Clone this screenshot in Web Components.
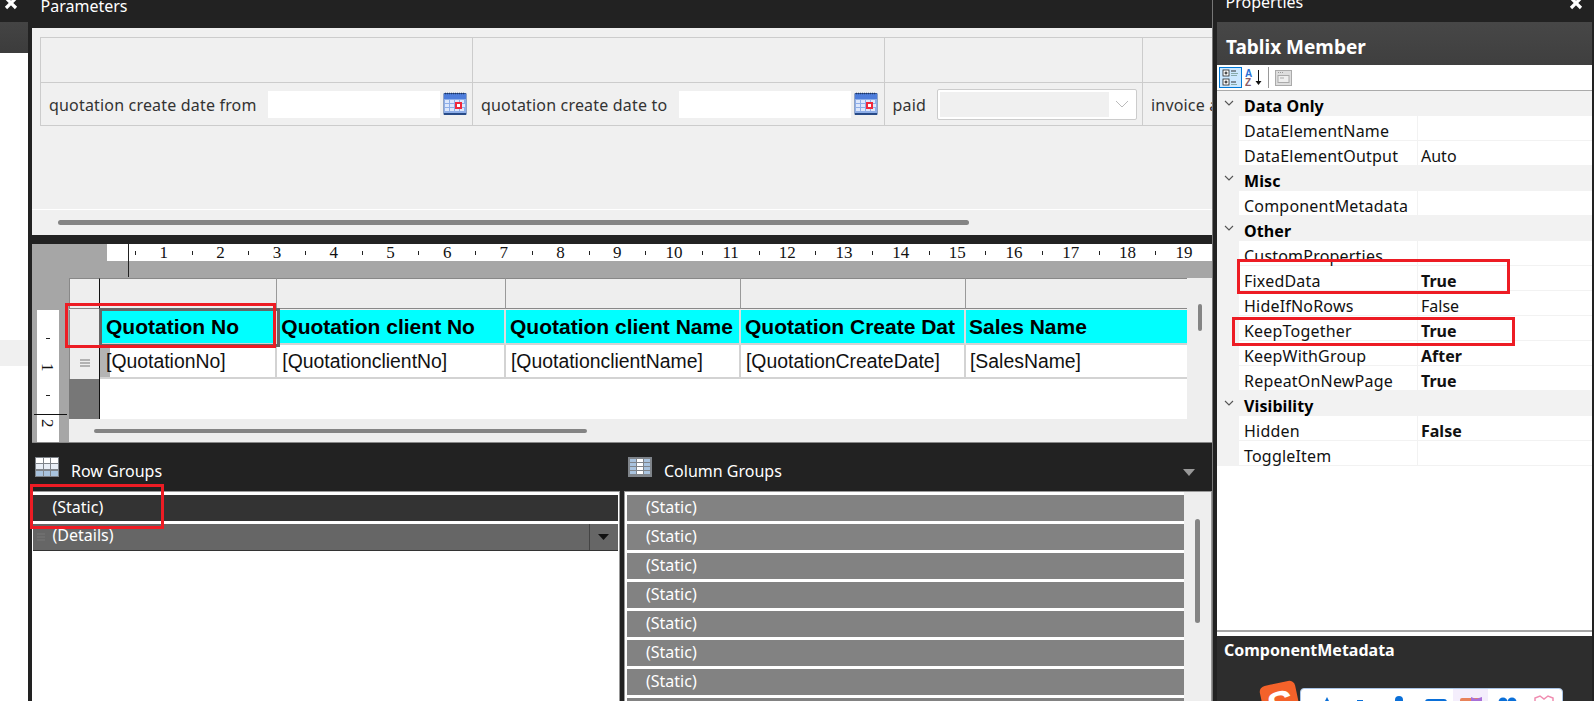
<!DOCTYPE html>
<html><head><meta charset="utf-8"><title>Report designer</title>
<style>html,body{margin:0;height:701px;overflow:hidden;background:#222;font-family:"Noto Sans","Open Sans",sans-serif}</style>
</head><body>
<app-shell>
  <left-rail></left-rail>
  <main-col>
    <param-panel></param-panel>
    <design-surface></design-surface>
    <group-pane></group-pane>
  </main-col>
  <prop-panel>
    <prop-cat>Data Only</prop-cat>
    <prop-row name="DataElementName"></prop-row>
    <prop-row name="DataElementOutput" value="Auto"></prop-row>
    <prop-cat>Misc</prop-cat>
    <prop-row name="ComponentMetadata"></prop-row>
    <prop-cat>Other</prop-cat>
    <prop-row name="CustomProperties"></prop-row>
    <prop-row name="FixedData" value="True" bold></prop-row>
    <prop-row name="HideIfNoRows" value="False"></prop-row>
    <prop-row name="KeepTogether" value="True" bold></prop-row>
    <prop-row name="KeepWithGroup" value="After" bold></prop-row>
    <prop-row name="RepeatOnNewPage" value="True" bold></prop-row>
    <prop-cat>Visibility</prop-cat>
    <prop-row name="Hidden" value="False" bold></prop-row>
    <prop-row name="ToggleItem"></prop-row>
  </prop-panel>
  <red-mark style="left:65px;top:303px;width:205px;height:39px"></red-mark>
  <red-mark style="left:30px;top:484px;width:128px;height:39px"></red-mark>
  <red-mark style="left:1237px;top:259px;width:267px;height:29px"></red-mark>
  <red-mark style="left:1232px;top:317px;width:277px;height:23px"></red-mark>
</app-shell>
<script>
const def=(name,html,ready)=>customElements.define(name,class extends HTMLElement{
  constructor(){super();this.attachShadow({mode:'open'}).innerHTML=typeof html==='function'?html(this):html;}
  connectedCallback(){if(ready)ready(this,this.shadowRoot);}
});
const closeX=`<svg width="14" height="14" viewBox="0 0 14 14"><path d="M2 2l10 10M12 2L2 12" stroke="#fff" stroke-width="3.2"/></svg>`;

def('app-shell',`<style>:host{display:flex;position:relative;width:1594px;height:701px;overflow:hidden;background:#222}</style><slot></slot>`);

def('red-mark',`<style>:host{display:block;position:absolute;border:3px solid #ed1c24;pointer-events:none}</style>`);

def('left-rail',`<style>
:host{display:flex;flex-direction:column;flex:none;width:28px;margin-right:4px;background:#fff;overflow:hidden}
.top{height:22px;background:#222;position:relative;padding-left:4px;box-sizing:border-box}
.top svg{display:block;margin-top:-4px}
.tab{height:31px;background:linear-gradient(#444,#3c3c3c)}
.gap{height:287px}
.sel{height:26px;background:#f0f0f0}
</style><div class="top">${closeX}</div><div class="tab"></div><div class="gap"></div><div class="sel"></div>`);

def('main-col',`<style>:host{display:flex;flex-direction:column;flex:none;width:1180px;height:701px;box-shadow:1px 0 0 #777}</style><slot></slot>`);

def('cal-icon',`<style>:host{display:block;width:24px;height:24px;flex:none}svg{display:block}</style>
<svg width="24" height="24" viewBox="0 0 24 24">
<rect x=".5" y="1" width="23" height="22" rx="1" fill="#2f5597"/>
<rect x="1" y="2" width="22" height="5" fill="#4e7ddb"/>
<path d="M2 1.500h20" stroke="#1d3565" stroke-width="1.600" stroke-dasharray="1 1"/>
<rect x="1" y="7" width="22" height="14" fill="#8eaee8"/>
<g fill="#dde7fb"><rect x="2" y="8" width="4" height="3"/><rect x="7" y="8" width="4" height="3"/><rect x="12" y="8" width="4" height="3"/><rect x="17" y="8" width="4" height="3"/><rect x="2" y="12" width="4" height="3"/><rect x="7" y="12" width="4" height="3"/><rect x="2" y="16" width="4" height="3"/><rect x="7" y="16" width="4" height="3"/><rect x="12" y="16" width="4" height="3"/><rect x="17" y="16" width="4" height="3"/><rect x="19" y="12" width="3" height="3"/></g>
<rect x="13" y="11" width="5" height="5" fill="#fff" stroke="#f0283c" stroke-width="2"/>
<rect x="1" y="21" width="22" height="2" fill="#274a87"/>
</svg>`);

def('date-box',`<style>
:host{display:flex;align-items:center;flex:none}
.i{width:var(--w,172px);height:27px;background:#fff}
cal-icon{margin-left:3px}
</style><div class="i"></div><cal-icon></cal-icon>`);

def('param-cell',`<style>
:host{display:flex;flex:none;flex-direction:column;box-sizing:border-box;border-right:1px solid #ccc;overflow:hidden}
.h{height:44px;border-bottom:1px solid #ccc;flex:none}
.b{height:43px;display:flex;align-items:center;padding-left:8px;color:#333;font-size:16px;white-space:nowrap;letter-spacing:.18px}
::slotted(span){padding-top:2px}
</style><div class="h"></div><div class="b"><slot></slot></div>`);

def('param-panel',`<style>
:host{display:block;height:235px;flex:none;overflow:hidden}
.t{height:28px;background:#222;color:#fff;font-size:16px;line-height:12px;padding-left:8.500px;box-sizing:border-box}
.b{height:207px;background:#f0f0f0;padding:9px 0 0 8px;box-sizing:border-box;display:flex;flex-direction:column}
.g{display:flex;height:89px;box-sizing:border-box;border:1px solid #ccc;border-right:0;width:1172px;overflow:hidden;flex:none}
.l{height:1px;background:#fff;margin:83px 0 0 -8px;flex:none}
.s{height:5px;border-radius:3px;background:#848484;width:911px;margin:10px 0 0 18px;flex:none}
.lb{margin-right:12px}
.lb.p{margin-right:11px}
.sel{flex:none;box-sizing:border-box;width:200px;height:31px;background:#fff;border:1px solid #ccc;border-radius:2px;padding:2px;display:flex;align-items:stretch}
.sel i{display:block;width:169px;background:#f0f0f0}
.sel svg{margin:auto}
</style>
<div class="t">Parameters</div>
<div class="b">
 <div class="g">
  <param-cell style="width:432px"><span class="lb p">quotation create date from</span><date-box></date-box></param-cell>
  <param-cell style="width:411.500px"><span class="lb">quotation create date to</span><date-box></date-box></param-cell>
  <param-cell style="width:258.500px"><span class="lb p">paid</span><div class="sel"><i></i><svg width="14" height="8" viewBox="0 0 14 8"><path d="M1 1l6 6 6-6" fill="none" stroke="#bbb"/></svg></div></param-cell>
  <param-cell style="width:100px;border:0"><span>invoice amount</span></param-cell>
 </div>
 <div class="l"></div><div class="s"></div>
</div>`);

def('h-ruler',()=>{let u='';for(let i=1;i<=20;i++)u+=`<div class="u"><i></i><b>${i}</b></div>`;
return `<style>
:host{display:flex;height:17px;background:#fff;overflow:hidden;font:17px/17px "Liberation Serif",serif;color:#111}
.u{flex:none;width:56.700px;height:17px;position:relative;display:flex;align-items:center;justify-content:flex-end}
i{display:block;width:1px;height:4px;background:#222;margin-right:auto;margin-left:28px}
b{font-weight:400;width:24px;text-align:center;margin-right:-12px;flex:none}
</style>${u}`});

def('v-ruler',`<style>
:host{display:flex;flex-direction:column;align-items:center;flex:none;width:21.500px;height:133px;background:#fff;font:17px/17px "Liberation Serif",serif;color:#111}
.u{flex:none;height:28.600px;display:flex;align-items:center;justify-content:center}
.u i{display:block;width:4.500px;height:1px;background:#222}
.n{writing-mode:vertical-rl}
.ln{flex:none;width:33px;height:1px;background:#111;margin:4px 0 0 -3px;align-self:flex-start}
.n2{writing-mode:vertical-rl;margin-top:4px;height:18px;overflow:hidden;line-height:17px}
.sp{height:14px;flex:none}
</style>
<div class="sp"></div><div class="u"><i></i></div><div class="u n">1</div><div class="u"><i></i></div><div class="ln"></div><div class="n2">2</div>`);

def('tablix-view',`<style>
:host{display:grid;grid-template-columns:31px 177.300px 228.700px 235px 225px 221px 25px;grid-template-rows:32px 35px 34px 40px 24px;flex:none;width:1143px;height:165px;position:relative;font-family:"Liberation Sans",sans-serif;background:#eee;overflow:hidden}
.hh{background:#eee;border-top:1px solid #888;border-bottom:1px solid #888;border-right:1px solid #111;border-left:1px solid #888;box-sizing:border-box;margin-bottom:1px}
.ch{background:#eee;border-top:1px solid #888;border-bottom:1px solid #888;border-right:1px solid #999;box-sizing:border-box;margin-bottom:1px}
.rail{grid-row:1/5;grid-column:7;background:#eee;padding:26px 0 0 11px}
.rail i{display:block;width:4px;height:27px;border-radius:2px;background:#848484}
.rh{background:#eee;border-left:1px solid #888;border-right:1px solid #111;box-sizing:border-box}
.rh.m{border-top:1px solid #ccc;display:flex;align-items:center;justify-content:center}
.rh.d{background:#777;border:0;border-right:1px solid #111}
.c{background:#0ff;font-weight:700;font-size:21px;line-height:33px;padding:0 0 0 4px;border-right:2px solid #ddd;border-bottom:2px solid #d3d3d3;box-sizing:border-box;white-space:nowrap;overflow:hidden;color:#000}
.c.a{padding-left:6px}
.c.z{padding-left:3px;border-right:0}
.v{background:#fff;font-size:19.400px;line-height:32px;padding:0 0 0 5px;border-right:2px solid #d3d3d3;border-bottom:2px solid #d3d3d3;box-sizing:border-box;white-space:nowrap;overflow:hidden;color:#111}
.v.f{background:linear-gradient(90deg,#b4b4b4 10px,#fff 10px);padding-left:6px}
.v.z{padding-left:4px;border-right:0}
.e{grid-column:2/7;background:#fff}
.foot{grid-column:1/8;background:#eee;padding:10px 0 0 25px}
.foot i{display:block;height:4px;width:493px;border-radius:2px;background:#848484}
.selc{position:absolute;left:30px;top:30px;width:175px;height:33px;border:3px solid #666}
</style>
<div class="hh"></div><div class="ch"></div><div class="ch"></div><div class="ch"></div><div class="ch"></div><div class="ch" style="border-right:0"></div><div class="rail"><i></i></div>
<div class="rh"></div><div class="c a">Quotation No</div><div class="c">Quotation client No</div><div class="c">Quotation client Name</div><div class="c">Quotation Create Dat</div><div class="c z">Sales Name</div>
<div class="rh m"><svg width="12" height="8" viewBox="0 0 12 8"><path d="M1 1h10M1 4h10M1 7h10" stroke="#777"/></svg></div><div class="v f">[QuotationNo]</div><div class="v">[QuotationclientNo]</div><div class="v">[QuotationclientName]</div><div class="v">[QuotationCreateDate]</div><div class="v z">[SalesName]</div>
<div class="rh d"></div><div class="e"></div>
<div class="foot"><i></i></div>
<div class="selc"></div>`);

def('design-surface',`<style>
:host{display:block;height:208px;flex:none;background:#222;padding-top:9px;box-sizing:border-box}
.a{height:199px;background:#a6a6a6;display:flex;flex-direction:column;border-bottom:1px solid #888;box-sizing:border-box;position:relative;overflow:hidden}
.top{display:flex;height:34px;flex:none}
h-ruler{flex:none;width:1105px;margin-left:75px}
.vl{position:absolute;left:96px;top:0;width:1px;height:33px;background:#222}
.m{display:flex;flex:1;min-height:0}
.gut{width:37px;flex:none;padding:32px 0 0 5px;box-sizing:border-box}
</style>
<div class="a"><div class="top"><h-ruler></h-ruler></div><div class="vl"></div>
<div class="m"><div class="gut"><v-ruler></v-ruler></div><tablix-view></tablix-view></div>
</div>`);

def('table-icon',h=>{
const cell=(x,y,w,hh,f)=>`<rect x="${x}" y="${y}" width="${w}" height="${hh}" fill="${f}"/>`;
let c='';
if(h.getAttribute('dir')==='col'){
  const cols=[[2,6,'#a9c3de'],[9,6,'#fff'],[16,6,'#a9c3de']];
  for(const [x,w,f] of cols)for(const y of [2,6,10,14])c+=cell(x,y,w,3,f);
}else{
  const rows=[[1,'#fff'],[7,'#e8eef6'],[14,'#a9c3de']];
  for(const [y,f] of rows)for(const [x,w] of [[1,7],[9,6],[16,7]])c+=cell(x,y,w,5,f);
}
return `<style>:host{display:block;width:24px;height:20px;flex:none}svg{display:block}</style>
<svg width="24" height="20" viewBox="0 0 24 20"><rect width="24" height="20" fill="#7f848a"/>${c}</svg>`});

def('group-row',`<style>
:host{display:flex;align-items:center;height:26px;flex:none;background:#828282;color:#fff;font-size:16px;padding-left:19.500px;box-sizing:border-box;margin-bottom:3px;position:relative;white-space:nowrap}
span{margin-top:-2px}
:host([kind=sel]){background:#333}
:host([kind=det]){background:#666;border-bottom:1px solid #333;height:27px;margin-bottom:0}
:host([kind=det]) span{margin-top:-4px}
.g{display:none}
:host([kind=det]) .g{display:block;width:8px;margin-left:-15.500px;margin-right:7.500px;flex:none}
.a{display:none;margin-left:auto;width:29px;height:100%;border-left:1px solid #444;align-items:center;justify-content:center;box-sizing:border-box}
:host([kind=det]) .a{display:flex}
</style><svg class="g" width="8" height="8" viewBox="0 0 8 8"><path d="M0 1h8M0 4h8M0 7h8" stroke="#777"/></svg><span><slot></slot></span><div class="a"><svg width="11" height="6" viewBox="0 0 11 6"><path d="M0 0h11L5.500 6z" fill="#111"/></svg></div>`);

def('group-pane',`<style>
:host{display:block;flex:1;min-height:0;background:#222;overflow:hidden}
.hd{display:flex;height:48px;box-sizing:border-box}
.h{display:flex;align-items:flex-start;color:#fff;font-size:16px;padding-top:14px;box-sizing:border-box;position:relative}
.h span{margin-left:12px;line-height:28px;margin-top:0}
.h1{width:592px;padding-left:3px}
.h2{flex:1;padding-left:4px}
.tri{position:absolute;left:559px;top:26px}
.bd{display:flex;height:220px}
.p{box-sizing:border-box;background:#fff;border:1px solid #999;border-bottom:0;padding-top:3px;overflow:hidden}
.p1{width:589px;margin-left:-1px;padding:3px 1px 0 1px;margin-right:4px}
.p2{width:589px;display:flex;padding-left:2px}
.list{width:557px;flex:none}
.sb{flex:1;background:#eee;margin-top:-3px;padding:27px 0 0 11px}
.sb i{display:block;width:5px;height:104px;border-radius:3px;background:#848484}
</style>
<div class="hd">
 <div class="h h1"><table-icon></table-icon><span>Row Groups</span></div>
 <div class="h h2"><table-icon dir="col"></table-icon><span>Column Groups</span><svg class="tri" width="12" height="7" viewBox="0 0 12 7"><path d="M0 0h12L6 7z" fill="#999"/></svg></div>
</div>
<div class="bd">
 <div class="p p1"><group-row kind="sel">(Static)</group-row><group-row kind="det">(Details)</group-row></div>
 <div class="p p2"><div class="list"><group-row>(Static)</group-row><group-row>(Static)</group-row><group-row>(Static)</group-row><group-row>(Static)</group-row><group-row>(Static)</group-row><group-row>(Static)</group-row><group-row>(Static)</group-row><group-row>(Static)</group-row></div><div class="sb"><i></i></div></div>
</div>`);

def('prop-cat',`<style>
:host{display:flex;align-items:center;height:25px;flex:none;background:#f2f2f2;font-weight:700;font-size:16px;color:#000;box-sizing:border-box;letter-spacing:.1px}
span{padding-top:4px;line-height:20px}
svg{margin:0 9px 0 6px;flex:none}
</style><svg width="12" height="7" viewBox="0 0 12 7"><path d="M2 1l4 4 4-4" fill="none" stroke="#555" stroke-width="1.100"/></svg><span><slot></slot></span>`);

def('prop-row',h=>{const v=h.getAttribute('value')||'',b=h.hasAttribute('bold');return `<style>
:host{display:flex;height:25px;flex:none;background:#fff;border-bottom:1px solid #f2f2f2;box-sizing:border-box;font-size:16px;color:#111;white-space:nowrap;line-height:18px}
.m{width:22px;background:#f2f2f2;flex:none}
.n{width:179px;padding:6px 0 0 5px;box-sizing:border-box;border-right:1px solid #f2f2f2;flex:none;letter-spacing:.2px}
.v{padding:6px 0 0 3px;box-sizing:border-box;font-weight:${b?700:400}}
</style><div class="m"></div><div class="n">${h.getAttribute('name')}</div><div class="v">${v}</div>`});

def('prop-tools',`<style>
:host{display:flex;align-items:center;height:26px;flex:none;background:#fff;border-bottom:1px solid #aaa;box-sizing:border-box;padding-left:2px}
.b{width:23px;height:21px;box-sizing:border-box;background:#cce8ff;border:1px solid #0078d7;display:flex;align-items:center;justify-content:center}
.az{margin-left:3px}
.sep{width:1px;height:21px;background:#999;margin:0 6px 0 5px}
svg{display:block}
text{font:700 10px "Liberation Sans",sans-serif}
</style>
<div class="b"><svg width="17" height="17" viewBox="0 0 17 17"><g fill="#fff" stroke="#222" stroke-width=".8"><rect x="1" y="1" width="6" height="6"/><rect x="1" y="10" width="6" height="6"/></g><path d="M2.500 4h3M4 2.500v3M2.500 13h3M4 11.500v3" stroke="#111"/><path d="M9 2h5M9 13h5" stroke="#333"/><path d="M9 4.500h7M9 6.500h6M9 15.500h6" stroke="#8aa"/></svg></div>
<svg class="az" width="18" height="18" viewBox="0 0 18 18"><text x="0" y="8" fill="#2a6fd6">A</text><text x="0" y="17" fill="#8a5a66">Z</text><path d="M13.500 1v14" stroke="#111"/><path d="M10.500 12h6l-3 4z" fill="#111"/></svg>
<div class="sep"></div>
<svg width="17" height="16" viewBox="0 0 17 16"><rect x=".5" y=".5" width="16" height="15" fill="#ddd" stroke="#aaa"/><path d="M3 2.500h6" stroke="#999" stroke-dasharray="1 1"/><rect x="3" y="5.500" width="11" height="7" fill="#eee" stroke="#aaa"/><path d="M5 8h4" stroke="#aaa"/></svg>`);

def('ime-bar',`<style>
:host{display:block;position:relative;height:65px;flex:none;background:#2d2d2d;color:#fff;overflow:hidden}
.t{font-weight:700;font-size:16px;line-height:20px;padding:4px 0 0 7px}
.bar{position:absolute;left:83px;top:52px;width:263px;height:30px;background:#fff;border:1px solid #a9c4e6;border-radius:4px;box-sizing:border-box}
.logo{position:absolute;left:45px;top:47px;width:36px;height:36px;border-radius:6px;background:#f4622a;transform:rotate(-12deg);color:#fff;font:700 40px/44px "Liberation Sans",sans-serif;text-align:center;overflow:hidden}
.glow{position:absolute;left:236px;top:53px;width:35px;height:14px;background:#f4eefc}
svg{position:absolute}
</style>
<div class="t">ComponentMetadata</div>
<div class="bar"></div><div class="glow"></div><div class="logo">S</div>
<svg style="left:102px;top:59px" width="16" height="14"><path d="M8 2l2 4h5l-4 3 1 5-4-3-4 3 1-5-4-3h5z" fill="#0a6fd8"/></svg>
<svg style="left:137px;top:58px" width="12" height="14"><rect x="3" y="6" width="6" height="8" fill="#0a6fd8"/></svg>
<svg style="left:176px;top:59px" width="12" height="14"><circle cx="6" cy="5" r="4" fill="#0a6fd8"/></svg>
<svg style="left:208px;top:59px" width="24" height="14"><rect x="0" y="4" width="22" height="10" rx="3" fill="#0a6fd8"/></svg>
<svg style="left:243px;top:59px" width="24" height="14"><rect x="0" y="3" width="22" height="11" rx="2" fill="#e8825a"/><path d="M11 14V2l5 2 6-2v12z" fill="#a86fd8"/></svg>
<svg style="left:281px;top:59px" width="20" height="14"><circle cx="5" cy="7" r="4.500" fill="#0a6fd8"/><circle cx="14" cy="7" r="4.500" fill="#0a6fd8"/></svg>
<svg style="left:316px;top:58px" width="22" height="14"><path d="M2 13V4l5-2 4 3 4-3 5 2v9" fill="none" stroke="#f08cb0" stroke-width="1.500"/></svg>`);

def('prop-panel',`<style>
:host{display:flex;flex-direction:column;flex:none;width:375px;height:701px;margin-left:5px;background:#fff;overflow:hidden}
.top{height:22px;background:#222;color:#fff;font-size:16px;line-height:4px;padding-left:8.500px;position:relative;flex:none;box-sizing:border-box}
.top svg{position:absolute;left:352px;top:-4px}
.ti{height:43px;background:linear-gradient(#474747,#3f3f3f);color:#fff;font-weight:700;font-size:19px;line-height:50px;padding-left:9px;flex:none;box-sizing:border-box}
.g{height:541px;flex:none;display:flex;flex-direction:column;overflow:hidden;background:#fff;border-bottom:2px solid #a5a5a5;box-sizing:border-box}
.gp{height:4px;flex:none;background:#fff}
.g2{display:flex;flex-direction:column;height:534px;overflow:hidden}
</style>
<div class="top">Properties${closeX}</div>
<div class="ti">Tablix Member</div>
<prop-tools></prop-tools>
<div class="g"><div class="g2"><slot></slot></div></div>
<div class="gp"></div><ime-bar></ime-bar>`);
</script>
</body></html>
